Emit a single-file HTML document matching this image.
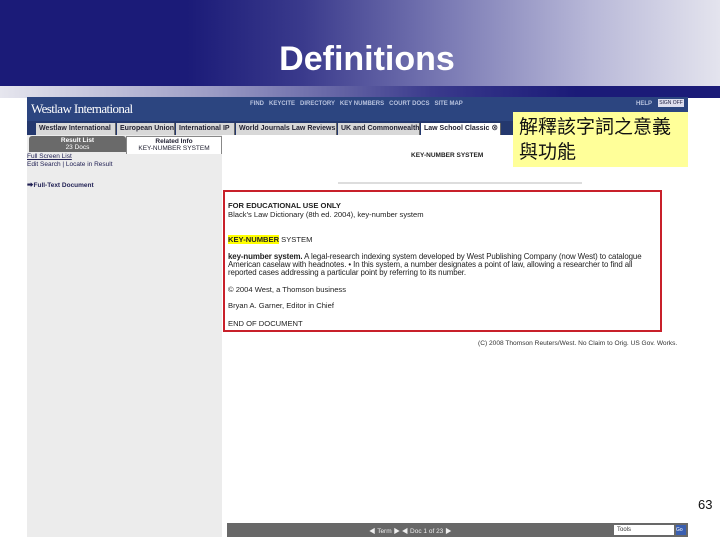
<!DOCTYPE html>
<html><head><meta charset="utf-8"><style>
*{margin:0;padding:0;box-sizing:border-box}
body{width:720px;height:540px;position:relative;overflow:hidden;background:#fff;font-family:"Liberation Sans","Noto Sans CJK TC",sans-serif}
.a{position:absolute}
.hdr{left:0;top:0;width:720px;height:86px;background:linear-gradient(90deg,#1b1b78 0%,#1b1b78 26%,#3a3a8c 42%,#7a7ab4 62%,#b8b8d8 82%,#e4e4ee 100%)}
.band{left:0;top:86px;width:720px;height:12px;background:linear-gradient(90deg,#e6e6ee 0%,#9a9ac4 30%,#3a3a8c 60%,#1b1b78 80%,#1b1b78 100%)}
h1{position:absolute;left:0;width:734px;top:40px;text-align:center;color:#fff;font-size:34px;font-weight:bold}
.wl{left:27px;top:97px;width:661px;height:24px;background:#2c4580}
.tabs{left:27px;top:121px;width:661px;height:14px;background:#24386e}
.tab{position:absolute;top:2px;height:12px;background:#d8d8d8;font-size:7px;font-weight:bold;color:#223;line-height:12px;padding-left:3px;white-space:nowrap;overflow:hidden;border-right:1px solid #666}
.nav{font-size:6px;color:#b8c2de;top:101px;font-weight:bold}
.left{left:27px;top:135px;width:195px;height:402px;background:#ececec}
.sm{font-size:6.5px;color:#225;white-space:nowrap}
.red{left:223px;top:190px;width:439px;height:142px;border:2px solid #c8202a}
.t{font-size:7.6px;color:#222;white-space:nowrap;position:absolute;left:3px}
</style></head><body>
<div class="a hdr"></div><div class="a band"></div>
<h1>Definitions</h1>
<div class="a wl"></div>
<div class="a" style="left:31px;top:101px;color:#fff;font-family:'Liberation Serif',serif;font-size:13px;letter-spacing:-0.6px">Westlaw International</div>
<div class="a nav" style="left:250px">FIND &nbsp; KEYCITE &nbsp; DIRECTORY &nbsp; KEY NUMBERS &nbsp; COURT DOCS &nbsp; SITE MAP</div>
<div class="a nav" style="left:636px">HELP</div>
<div class="a" style="left:658px;top:99px;width:26px;height:8px;background:#dde;font-size:5px;color:#224;text-align:center;line-height:8px">SIGN OFF</div>
<div class="a tabs">
<div class="tab" style="left:9px;width:80px">Westlaw International</div>
<div class="tab" style="left:90px;width:58px">European Union</div>
<div class="tab" style="left:149px;width:59px">International IP</div>
<div class="tab" style="left:209px;width:101px">World Journals Law Reviews</div>
<div class="tab" style="left:311px;width:82px">UK and Commonwealth</div>
<div class="tab" style="left:394px;width:80px;background:#fff">Law School Classic ⊗</div>
</div>
<div class="a left"></div>
<div class="a" style="left:29px;top:136px;width:97px;height:16px;background:#6a6a6a;border-radius:3px 3px 0 0;color:#fff;font-size:6.5px;text-align:center;line-height:7px;padding-top:1px"><b>Result List</b><br>23 Docs</div>
<div class="a" style="left:126px;top:136px;width:96px;height:18px;background:#fff;border:1px solid #888;border-bottom:none;font-size:6.5px;text-align:center;line-height:7px;padding-top:1px;color:#223"><b>Related Info</b><br>KEY-NUMBER SYSTEM</div>
<div class="a sm" style="left:27px;top:153px;text-decoration:underline">Full Screen List</div>
<div class="a sm" style="left:27px;top:161px">Edit Search | Locate in Result</div>
<div class="a sm" style="left:27px;top:179px;font-weight:bold">➡Full-Text Document</div>
<div class="a" style="left:411px;top:152px;font-size:6.5px;font-weight:bold;color:#222">KEY-NUMBER SYSTEM</div>
<div class="a" style="left:338px;top:182px;width:244px;height:2px;background:#ddd"></div>
<div class="a" style="left:513px;top:112px;width:175px;height:55px;background:#ffff99"></div>
<div class="a" style="left:519px;top:115px;font-size:19px;line-height:25px;color:#111">解釋該字詞之意義<br>與功能</div>
<div class="a red">
<div class="t" style="top:9px;font-weight:bold">FOR EDUCATIONAL USE ONLY</div>
<div class="t" style="top:18px">Black's Law Dictionary (8th ed. 2004), key-number system</div>
<div class="t" style="top:43px"><b style="background:#ff0">KEY-NUMBER</b> SYSTEM</div>
<div class="t" style="top:60px;font-size:7.9px;letter-spacing:-0.1px"><b>key-number system.</b> A legal-research indexing system developed by West Publishing Company (now West) to catalogue</div>
<div class="t" style="top:68px;font-size:7.9px;letter-spacing:-0.1px">American caselaw with headnotes. • In this system, a number designates a point of law, allowing a researcher to find all</div>
<div class="t" style="top:76px;font-size:7.9px;letter-spacing:-0.1px">reported cases addressing a particular point by referring to its number.</div>
<div class="t" style="top:93px">© 2004 West, a Thomson business</div>
<div class="t" style="top:109px">Bryan A. Garner, Editor in Chief</div>
<div class="t" style="top:127px">END OF DOCUMENT</div>
</div>
<div class="a" style="left:478px;top:340px;font-size:6.6px;color:#333;white-space:nowrap">(C) 2008 Thomson Reuters/West. No Claim to Orig. US Gov. Works.</div>
<div class="a" style="left:698px;top:497px;font-size:13px;color:#111">63</div>
<div class="a" style="left:227px;top:523px;width:461px;height:14px;background:#686868"></div>
<div class="a" style="left:369px;top:525px;font-size:6.5px;color:#eee;white-space:nowrap">◀ Term ▶ ◀ Doc 1 of 23 ▶</div>
<div class="a" style="left:614px;top:525px;width:60px;height:10px;background:#fff;font-size:6px;line-height:10px;padding-left:3px;color:#333">Tools</div>
<div class="a" style="left:676px;top:525px;width:10px;height:10px;background:#3a5fb0;font-size:5px;color:#fff;line-height:10px">Go</div>
</body></html>
